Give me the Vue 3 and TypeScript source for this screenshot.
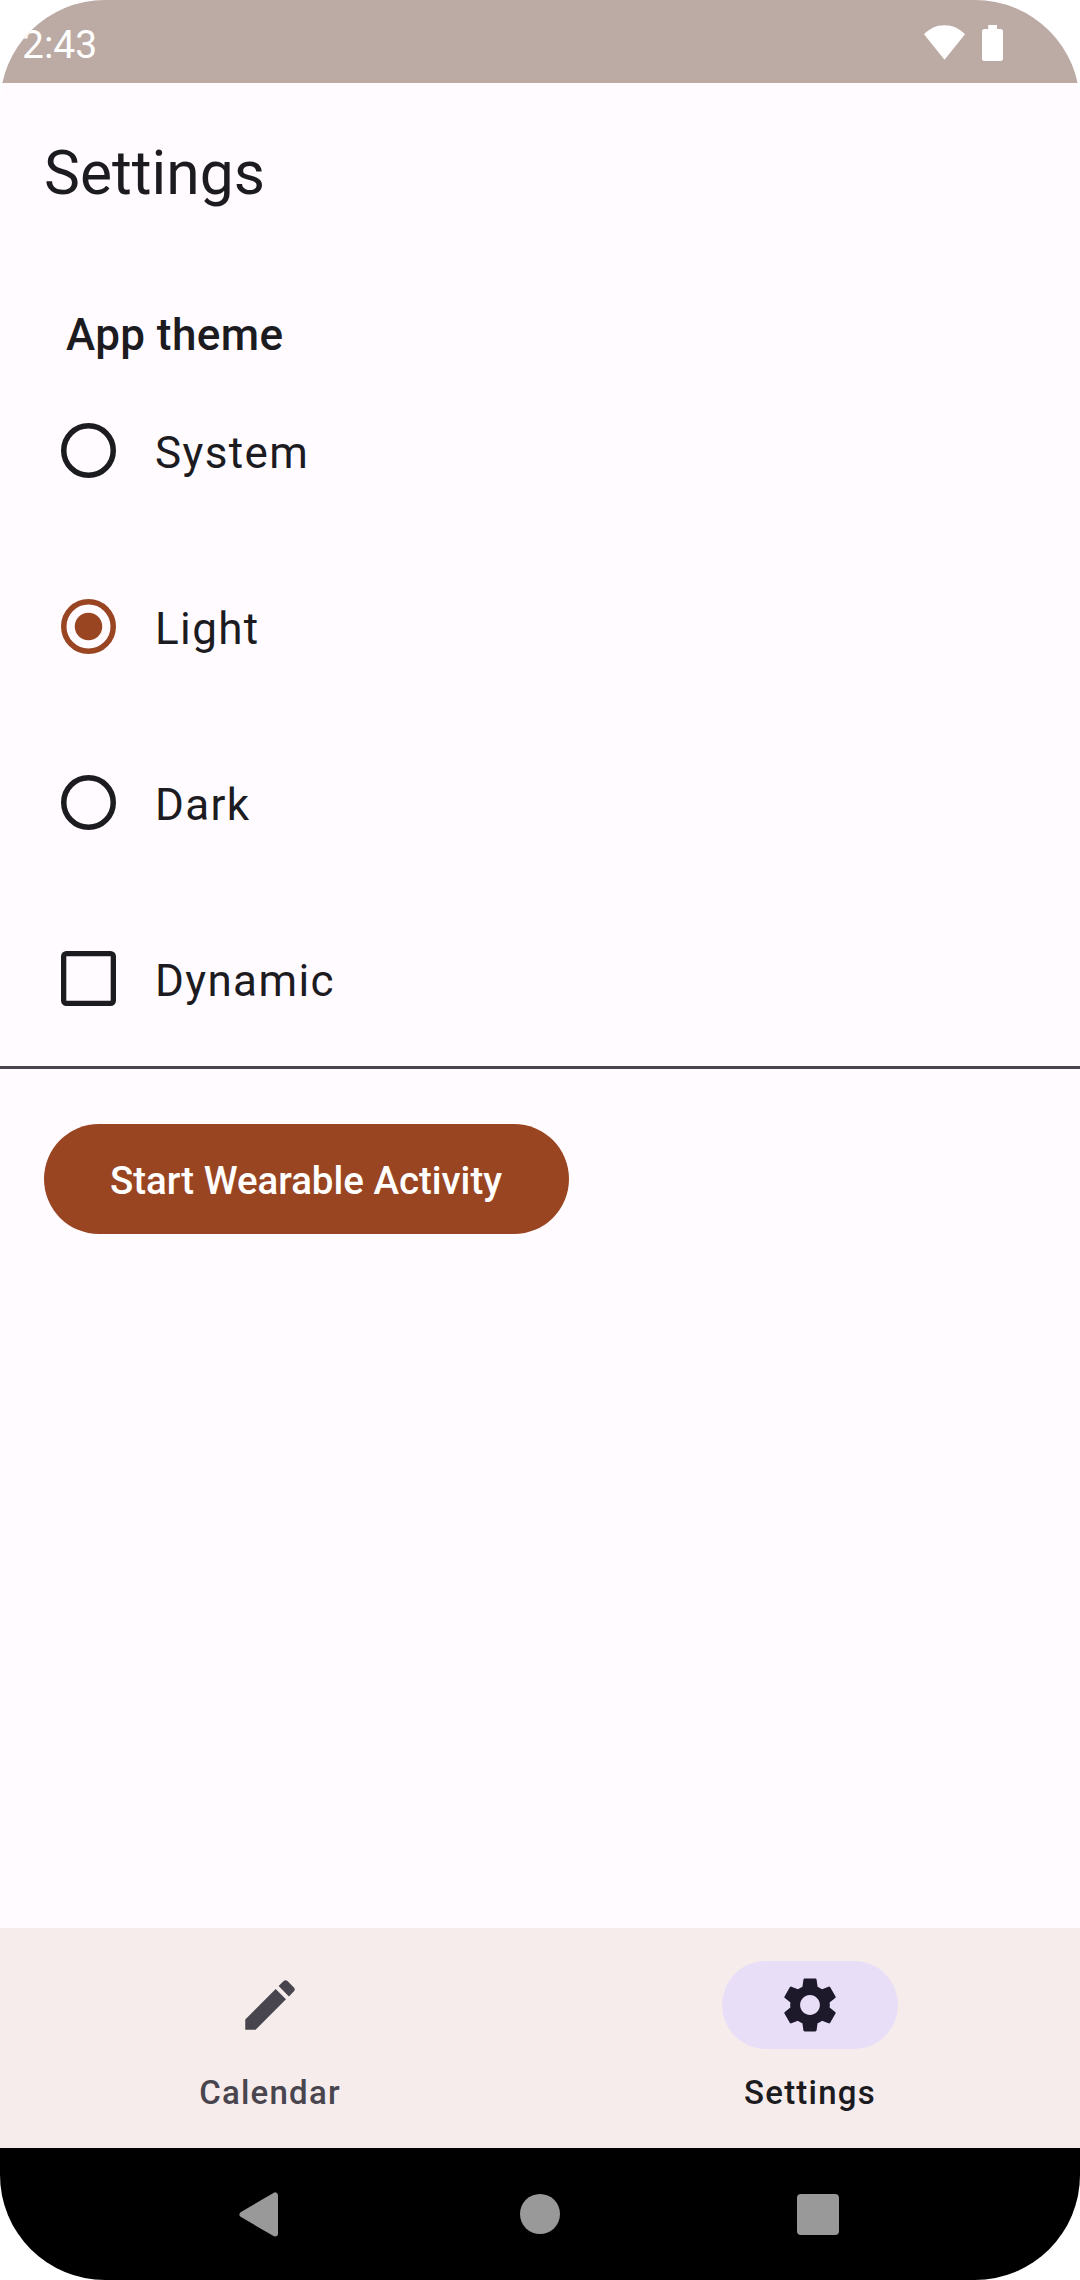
<script setup lang="ts">
import { ref } from 'vue'

const themes: string[] = ['System', 'Light', 'Dark']
const selected = ref('Light')
const dynamic = ref(false)
</script>

<template>
  <div class="screen">
    <header class="status">
      <span class="clock">2:43</span>
      <svg class="wifi" width="41" height="35" viewBox="0 0 41 35">
        <path d="M0 9.3C5.5 3.4 12.5.2 20.5.2S35.500 3.400 41 9.300L20.500 34.700Z" fill="#fff" />
      </svg>
      <svg class="battery" width="21" height="36" viewBox="0 0 21 36">
        <path d="M6.200 0h8.800v4h3.500a2.500 2.500 0 0 1 2.500 2.500v27a2.500 2.500 0 0 1-2.500 2.500h-16A2.500 2.500 0 0 1 0 33.500v-27A2.500 2.500 0 0 1 2.500 4h3.700z" fill="#fff" />
      </svg>
    </header>

    <main class="content">
      <h1 class="title">Settings</h1>
      <h2 class="section">App theme</h2>
      <div v-for="t in themes" :key="t" class="row" @click="selected = t">
        <svg class="radio" :class="{ on: selected === t }" width="55" height="55" viewBox="0 0 55 55">
          <circle cx="27.5" cy="27.5" r="24.75" fill="none" stroke="currentColor" stroke-width="5.5" />
          <circle v-if="selected === t" cx="27.5" cy="27.5" r="13.75" fill="currentColor" />
        </svg>
        <span class="label">{{ t }}</span>
      </div>
      <div class="row" @click="dynamic = !dynamic">
        <svg width="55" height="55" viewBox="0 0 55 55">
          <rect x="2.65" y="2.65" width="49.7" height="49.7" rx="2.75" fill="none" stroke="currentColor" stroke-width="5.3" />
        </svg>
        <span class="label">Dynamic</span>
      </div>
      <div class="divider" />
      <button class="start">Start Wearable Activity</button>
    </main>

    <nav class="tabs">
      <div class="tab">
        <span class="pill">
          <svg width="66" height="66" viewBox="0 0 24 24">
            <path fill="#49454f" d="M3 17.250V21h3.750L17.810 9.940l-3.750-3.750L3 17.250zM20.710 7.040c.39-.39.39-1.020 0-1.410l-2.340-2.340c-.39-.39-1.020-.39-1.410 0l-1.830 1.830 3.750 3.750 1.830-1.830z" />
          </svg>
        </span>
        <span class="tab-label">Calendar</span>
      </div>
      <div class="tab active">
        <span class="pill">
          <svg width="66" height="66" viewBox="0 0 24 24">
            <path fill="#1d192b" d="M19.140 12.940c.04-.3.06-.61.06-.94 0-.32-.02-.64-.07-.94l2.030-1.580c.18-.14.23-.41.12-.61l-1.920-3.320c-.12-.22-.37-.29-.59-.22l-2.390.96c-.5-.38-1.030-.7-1.620-.94l-.36-2.540c-.04-.24-.24-.41-.48-.41h-3.840c-.24 0-.43.17-.47.41l-.36 2.540c-.59.24-1.130.57-1.620.94l-2.390-.96c-.22-.08-.47 0-.59.22L2.740 8.870c-.12.21-.08.47.12.61l2.030 1.580c-.05.3-.09.63-.09.94s.02.64.07.94l-2.030 1.580c-.18.14-.23.41-.12.61l1.920 3.320c.12.22.37.29.59.22l2.390-.96c.5.38 1.030.7 1.620.94l.36 2.540c.05.24.24.41.48.41h3.840c.24 0 .44-.17.47-.41l.36-2.540c.59-.24 1.130-.56 1.620-.94l2.390.96c.22.08.47 0 .59-.22l1.920-3.320c.12-.22.07-.47-.12-.61l-2.010-1.580zM12 15.600c-1.980 0-3.600-1.620-3.600-3.600s1.620-3.600 3.600-3.600 3.600 1.620 3.600 3.600-1.620 3.600-3.600 3.600z" />
          </svg>
        </span>
        <span class="tab-label">Settings</span>
      </div>
    </nav>

    <footer class="system">
      <svg class="back" width="39" height="45" viewBox="0 0 39 45">
        <path d="M3.500 22.500L36 3.500V41.500Z" fill="#999" stroke="#999" stroke-width="6" stroke-linejoin="round" />
      </svg>
      <span class="home" />
      <span class="recent" />
    </footer>
  </div>
</template>

<style>
body {
  background: #fff;
}
</style>

<style scoped>
.screen {
  width: 1080px;
  height: 2280px;
  display: flex;
  flex-direction: column;
  overflow: hidden;
  border-radius: 105px;
  background: #fffbff;
  color: #1c1b1f;
  font-family: Roboto, sans-serif;
}
.status {
  flex: none;
  box-sizing: border-box;
  height: 83px;
  display: flex;
  align-items: flex-start;
  padding: 25px 77px 0 22px;
  background: #bbaba4;
  color: #fff;
}
.clock {
  flex: 1;
  font-size: 39px;
  line-height: 40px;
}
.wifi {
  margin-right: 17px;
}
.content {
  flex: 1;
  display: flex;
  flex-direction: column;
}
.title {
  margin: 0;
  padding-left: 44px;
  height: 181px;
  line-height: 181px;
  font-size: 60.5px;
  font-weight: 400;
}
.section {
  margin: 43px 0 0;
  padding-left: 66px;
  height: 55px;
  line-height: 57px;
  font-size: 44px;
  font-weight: 500;
  letter-spacing: 0.41px;
}
.row {
  box-sizing: border-box;
  height: 176px;
  padding: 61px 0 0 61px;
  display: flex;
  align-items: flex-start;
  gap: 39px;
}
.radio.on {
  color: #9a4522;
}
.label {
  padding-top: 3px;
  font-size: 44px;
  line-height: 55px;
  letter-spacing: 1.375px;
}
.divider {
  height: 3px;
  background: #49454f;
}
.start {
  align-self: flex-start;
  box-sizing: border-box;
  width: 525px;
  height: 110px;
  margin: 55px 0 0 44px;
  padding: 3px 1px 0 0;
  border: 0;
  border-radius: 55px;
  background: #9a4522;
  color: #fff;
  font: 500 38.5px/50px Roboto, sans-serif;
  letter-spacing: -0.03px;
  white-space: nowrap;
}
.tabs {
  flex: none;
  box-sizing: border-box;
  height: 220px;
  padding-top: 33px;
  display: flex;
  background: #f6eceb;
}
.tab {
  flex: 1;
  display: flex;
  flex-direction: column;
  align-items: center;
  color: #49454f;
}
.active {
  color: #1c1b1f;
}
.pill {
  width: 176px;
  height: 88px;
  border-radius: 44px;
  display: flex;
  align-items: center;
  justify-content: center;
}
.active .pill {
  background: #e8def8;
}
.tab-label {
  margin-top: 22px;
  font-size: 33px;
  line-height: 44px;
  font-weight: 500;
  letter-spacing: 1.22px;
}
.system {
  flex: none;
  box-sizing: border-box;
  height: 132px;
  padding: 44px 241px 0 239px;
  display: flex;
  align-items: flex-start;
  background: #000;
}
.home {
  width: 40px;
  height: 40px;
  margin: 2px 237px 0 242px;
  border-radius: 50%;
  background: #999;
}
.recent {
  width: 42px;
  height: 41px;
  margin-top: 2px;
  border-radius: 4px;
  background: #999;
}
</style>
